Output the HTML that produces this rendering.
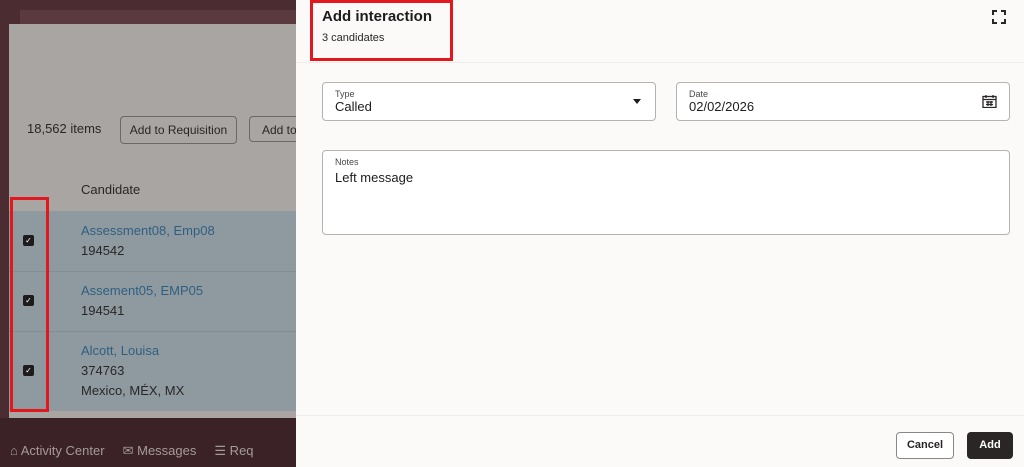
<!DOCTYPE html><html><head><style>
body{margin:0;width:1024px;height:467px;overflow:hidden;position:relative;font-family:"Liberation Sans",sans-serif;background:#4a2b30}
.a{position:absolute}
</style></head><body>
<div class="a" style="left:0;top:0;width:296px;height:467px;background:#4b2c31"></div>
<div class="a" style="left:20px;top:10px;width:276px;height:14px;background:#5a3a3e"></div>
<div class="a" style="left:9px;top:24px;width:287px;height:394px;background:#a8a5a2"></div>
<div class="a" style="left:27px;top:121px;font-size:13px;color:#2a2626">18,562 items</div>
<div class="a" style="left:120px;top:116px;width:115px;height:26px;border:1px solid #6c6866;border-radius:4px;font-size:12px;color:#2a2626;line-height:26px;text-align:center">Add to Requisition</div>
<div class="a" style="left:249px;top:116px;width:60px;height:26px;border:1px solid #6c6866;border-radius:4px;font-size:12px;color:#2a2626;line-height:26px;padding-left:12px;box-sizing:border-box">Add to</div>
<div class="a" style="left:81px;top:182px;font-size:13px;color:#2a2626">Candidate</div>
<div class="a" style="left:9px;top:211px;width:287px;height:200px;background:#8f9aa0"></div>
<div class="a" style="left:9px;top:271px;width:287px;height:1px;background:#848d92"></div>
<div class="a" style="left:9px;top:331px;width:287px;height:1px;background:#848d92"></div>
<div class="a" style="left:81px;top:221px;font-size:13px;line-height:20px;color:#2a2626"><span style="color:#2f5f80">Assessment08, Emp08</span><br>194542</div>
<div class="a" style="left:81px;top:281px;font-size:13px;line-height:20px;color:#2a2626"><span style="color:#2f5f80">Assement05, EMP05</span><br>194541</div>
<div class="a" style="left:81px;top:341px;font-size:13px;line-height:20px;color:#2a2626"><span style="color:#2f5f80">Alcott, Louisa</span><br>374763<br>Mexico, MÉX, MX</div>
<div class="a" style="left:23px;top:235px;width:11px;height:11px;background:#1d1b1c;border-radius:2px;color:#fff;font-size:8px;text-align:center;line-height:11px">✓</div>
<div class="a" style="left:23px;top:295px;width:11px;height:11px;background:#1d1b1c;border-radius:2px;color:#fff;font-size:8px;text-align:center;line-height:11px">✓</div>
<div class="a" style="left:23px;top:365px;width:11px;height:11px;background:#1d1b1c;border-radius:2px;color:#fff;font-size:8px;text-align:center;line-height:11px">✓</div>
<div class="a" style="left:10px;top:197px;width:33px;height:209px;border:3px solid #e3181f"></div>
<div class="a" style="left:0;top:418px;width:296px;height:49px;background:#3b2226"></div>
<div class="a" style="left:10px;top:443px;font-size:13px;color:#a59a9b;white-space:nowrap">⌂ Activity Center &nbsp;&nbsp;&nbsp; ✉ Messages &nbsp;&nbsp;&nbsp; ☰ Req</div>

<div class="a" style="left:296px;top:0;width:728px;height:467px;background:#fbfaf9"></div>
<div class="a" style="left:296px;top:62px;width:728px;height:1px;background:#efedeb"></div>
<div class="a" style="left:322px;top:8px;font-size:15px;font-weight:bold;color:#1e1c1c">Add interaction</div>
<div class="a" style="left:322px;top:32px;font-size:11px;color:#2a2626">3 candidates</div>
<div class="a" style="left:310px;top:0;width:137px;height:55px;border:3px solid #e3181f"></div>
<svg class="a" style="left:992px;top:10px" width="14" height="14" viewBox="0 0 14 14" fill="none" stroke="#2a2626" stroke-width="2"><path d="M1 5V1H5M9 1H13V5M13 9V13H9M5 13H1V9"/></svg>
<div class="a" style="left:322px;top:82px;width:334px;height:39px;border:1px solid #b5b2af;border-radius:4px;background:#fff;box-sizing:border-box"></div>
<div class="a" style="left:335px;top:89px;font-size:9px;color:#4a4646">Type</div>
<div class="a" style="left:335px;top:99px;font-size:13px;color:#1e1c1c">Called</div>
<div class="a" style="left:633px;top:99px;width:0;height:0;border-left:4px solid transparent;border-right:4px solid transparent;border-top:5px solid #1e1c1c"></div>
<div class="a" style="left:676px;top:82px;width:334px;height:39px;border:1px solid #b5b2af;border-radius:4px;background:#fff;box-sizing:border-box"></div>
<div class="a" style="left:689px;top:89px;font-size:9px;color:#4a4646">Date</div>
<div class="a" style="left:689px;top:99px;font-size:13px;color:#1e1c1c">02/02/2026</div>
<svg class="a" style="left:982px;top:94px" width="15" height="14" viewBox="0 0 15 14" fill="none" stroke="#2a2626" stroke-width="1.3"><rect x="1" y="2.5" width="13" height="11"/><path d="M1 5.5H14M4 1V4M11 1V4M4 8H11M4 10.5H11M6 7V12M9 7V12"/></svg>
<div class="a" style="left:322px;top:150px;width:688px;height:85px;border:1px solid #b5b2af;border-radius:4px;background:#fff;box-sizing:border-box"></div>
<div class="a" style="left:335px;top:157px;font-size:9px;color:#4a4646">Notes</div>
<div class="a" style="left:335px;top:170px;font-size:13px;color:#1e1c1c">Left message</div>
<div class="a" style="left:296px;top:415px;width:728px;height:1px;background:#efedeb"></div>
<div class="a" style="left:896px;top:432px;width:58px;height:27px;border:1px solid #8a8684;border-radius:4px;background:#fff;box-sizing:border-box;font-size:11px;font-weight:bold;color:#2a2626;text-align:center;line-height:25px">Cancel</div>
<div class="a" style="left:967px;top:432px;width:46px;height:27px;border-radius:4px;background:#2b2626;font-size:11px;font-weight:bold;color:#fff;text-align:center;line-height:27px">Add</div>
</body></html>
